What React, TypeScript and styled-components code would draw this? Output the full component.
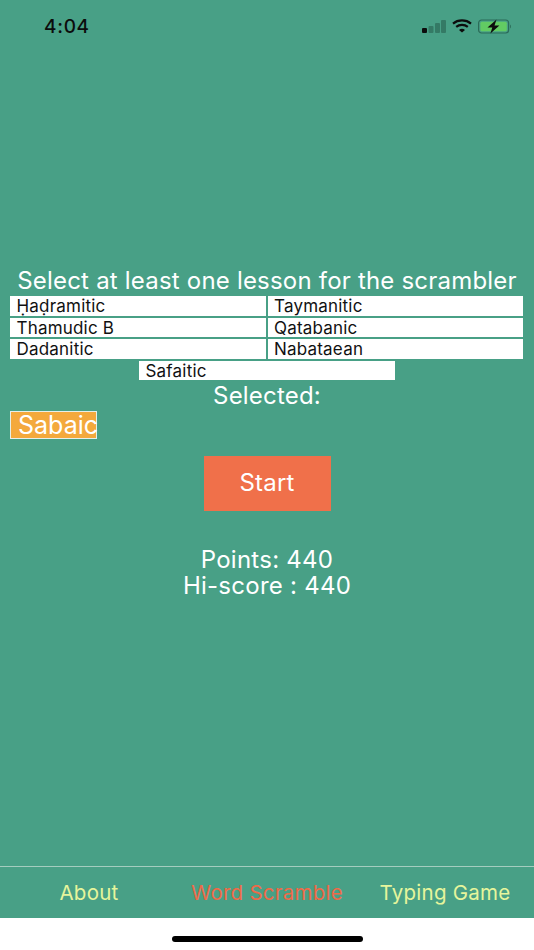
import React from "react"
import styled, { createGlobalStyle } from "styled-components"

const GlobalStyle = createGlobalStyle`
    html, body {
        margin: 0;
        padding: 0;
        background: #fff;
    }
    * {
        box-sizing: border-box;
    }
`

const lessons = ["Ḥaḍramitic", "Taymanitic", "Thamudic B", "Qatabanic", "Dadanitic", "Nabataean"]

const Screen = styled.div`
    width: 534px;
    height: 950px;
    display: flex;
    flex-direction: column;
    overflow: hidden;
    font-family: Inter, "Liberation Sans", sans-serif;
    background: #fff;
`

const Green = styled.div`
    height: 918px;
    display: flex;
    flex-direction: column;
    background: #48a086;
`

const StatusBar = styled.div`
    height: 52px;
    padding: 0 22px 0 44px;
    display: flex;
    align-items: center;
    justify-content: space-between;
    color: #0c0c0c;
`

const Clock = styled.span`
    font-size: 19px;
    font-weight: 500;
    letter-spacing: 0.7px;
`

const StatusIcons = styled.div`
    display: flex;
    align-items: center;
    gap: 6px;
`

const Main = styled.main`
    flex: 1;
    padding-top: 214px;
    display: flex;
    flex-direction: column;
    align-items: center;
`

const Heading = styled.h1`
    margin: 0;
    height: 30px;
    font-size: 24px;
    line-height: 30px;
    font-weight: 400;
    color: #fff;
    letter-spacing: 0.2px;
    white-space: nowrap;
`

const LessonGrid = styled.div`
    width: 534px;
    padding: 0 10px;
    display: grid;
    grid-template-columns: 255.5px 255.5px;
    grid-auto-rows: 19.5px;
    column-gap: 2px;
    row-gap: 2px;
`

const Lesson = styled.div`
    height: 19.5px;
    padding-left: 6.5px;
    background: #fff;
    color: #111;
    font-size: 17px;
    line-height: 20px;
    letter-spacing: 0.2px;
    white-space: nowrap;
`

const LoneLesson = styled(Lesson)`
    width: 256px;
    margin-top: 2px;
`

const SelectedLabel = styled.div`
    height: 30px;
    padding-top: 1px;
    font-size: 24px;
    line-height: 30px;
    color: #fff;
    letter-spacing: 0.2px;
`

const SelectedRow = styled.div`
    width: 534px;
    padding: 0 10px;
    margin-top: 1px;
`

const Chip = styled.div`
    width: 87px;
    height: 28px;
    padding-left: 7px;
    background: #f4a93c;
    border: 1px solid #e6efe9;
    color: #fff;
    font-size: 25px;
    line-height: 27px;
    white-space: nowrap;
`

const StartButton = styled.button`
    width: 127px;
    height: 54.5px;
    margin-top: 17px;
    border: 0;
    padding: 0 0 2px;
    background: #f0704a;
    color: #fff;
    font-family: inherit;
    font-size: 24px;
    letter-spacing: 0.2px;
`

const Score = styled.div`
    margin-top: 36px;
    font-size: 24px;
    line-height: 26px;
    color: #fff;
    text-align: center;
    letter-spacing: 0.25px;
    white-space: nowrap;
`

const TabBar = styled.nav`
    height: 52px;
    border-top: 1px solid #a5cdbf;
    display: grid;
    grid-template-columns: repeat(3, 178px);
    align-items: center;
`

const Tab = styled.div<{ $active?: boolean }>`
    text-align: center;
    font-size: 20.5px;
    color: ${(p) => (p.$active ? "#ee6a48" : "#e6f59c")};
    letter-spacing: 0.25px;
    white-space: nowrap;
`

const HomeArea = styled.div`
    flex: 1;
    display: flex;
    justify-content: center;
    padding-top: 18px;
`

const HomeBar = styled.div`
    width: 191px;
    height: 5.5px;
    border-radius: 3px;
    background: #000;
`

const SignalIcon = () => (
    <svg width="24" height="15" viewBox="0 0 24 15">
        <rect x="0" y="9" width="5" height="5" rx="1" fill="#0c0c0c" />
        <rect x="6.5" y="7" width="5" height="7" rx="1" fill="#347a65" />
        <rect x="13" y="4" width="5" height="10" rx="1" fill="#347a65" />
        <rect x="19" y="1" width="5" height="13" rx="1" fill="#347a65" />
    </svg>
)

const WifiIcon = () => (
    <svg width="20" height="14" viewBox="0 0 20 14" fill="none" stroke="#0c0c0c" strokeWidth="2.2">
        <path d="M1 4.6C6 .4 14 .4 19 4.6" />
        <path d="M4.2 7.9C7.4 5.3 12.6 5.3 15.8 7.9" />
        <path d="M10 13.6L7 10.9C8.8 9.5 11.2 9.5 13 10.9Z" fill="#0c0c0c" stroke="none" />
    </svg>
)

const BatteryIcon = () => (
    <svg width="34" height="15" viewBox="0 0 34 15">
        <rect x="0.6" y="1" width="30" height="13" rx="3" fill="none" stroke="#2b6b58" strokeWidth="1.2" />
        <rect x="2.4" y="2.8" width="26.4" height="9.4" rx="1.5" fill="#62cb63" />
        <path d="M32 5.5c1.2.4 1.2 3.6 0 4z" fill="#2b6b58" />
        <path d="M18.5 0.4L9.5 8.4h4.8L12.4 14.6l9-8.2h-4.9z" fill="#0c0c0c" />
    </svg>
)

const App = () => {
    return (
        <Screen>
            <GlobalStyle />
            <Green>
                <StatusBar>
                    <Clock>4:04</Clock>
                    <StatusIcons>
                        <SignalIcon />
                        <WifiIcon />
                        <BatteryIcon />
                    </StatusIcons>
                </StatusBar>
                <Main>
                    <Heading>Select at least one lesson for the scrambler</Heading>
                    <LessonGrid>
                        {lessons.map((name) => (
                            <Lesson key={name}>{name}</Lesson>
                        ))}
                    </LessonGrid>
                    <LoneLesson>Safaitic</LoneLesson>
                    <SelectedLabel>Selected:</SelectedLabel>
                    <SelectedRow>
                        <Chip>Sabaic</Chip>
                    </SelectedRow>
                    <StartButton>Start</StartButton>
                    <Score>
                        Points: 440
                        <br />
                        Hi-score : 440
                    </Score>
                </Main>
                <TabBar>
                    <Tab>About</Tab>
                    <Tab $active>Word Scramble</Tab>
                    <Tab>Typing Game</Tab>
                </TabBar>
            </Green>
            <HomeArea>
                <HomeBar />
            </HomeArea>
        </Screen>
    )
}

export default App
